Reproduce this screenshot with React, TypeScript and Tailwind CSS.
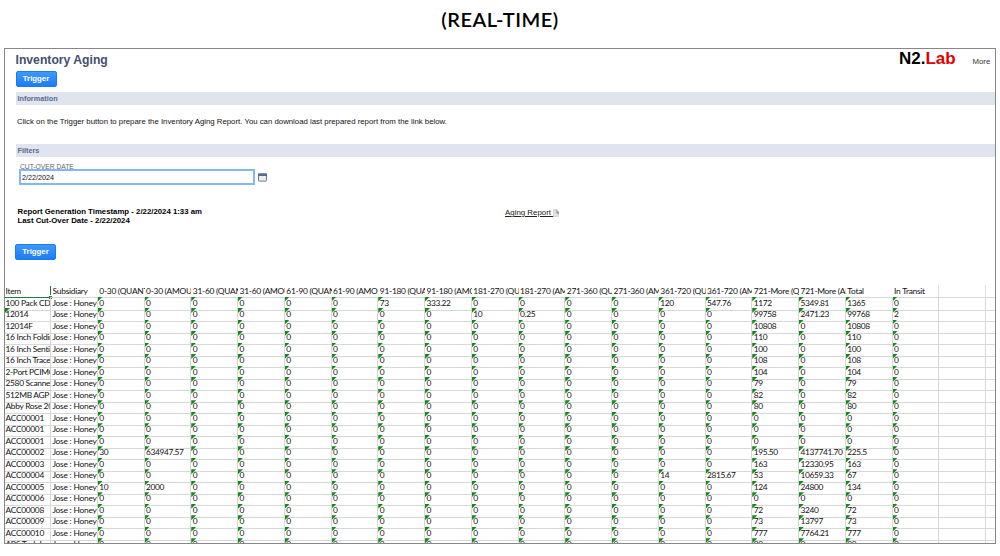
import React from "react";

const headers = [
  "Item", "Subsidiary", "0-30 (QUANTITY)", "0-30 (AMOUNT)", "31-60 (QUANTITY)", "31-60 (AMOUNT)",
  "61-90 (QUANTITY)", "61-90 (AMOUNT)", "91-180 (QUANTITY)", "91-180 (AMOUNT)", "181-270 (QUANTITY)",
  "181-270 (AMOUNT)", "271-360 (QUANTITY)", "271-360 (AMOUNT)", "361-720 (QUANTITY)", "361-720 (AMOUNT)",
  "721-More (QUANTITY)", "721-More (AMOUNT)", "Total", "In Transit", "", "",
];

type Row = { item: string; more: string; amount: string; total: string; transit?: string; extra?: Record<number, string> };

const rows: Row[] = [
  { item: "100 Pack CD-R", more: "1172", amount: "5349.81", total: "1365", extra: { 6: "73", 7: "333.22", 12: "120", 13: "547.76" } },
  { item: "12014", more: "99758", amount: "2471.23", total: "99768", transit: "2", extra: { 8: "10", 9: "0.25" } },
  { item: "12014F", more: "10808", amount: "0", total: "10808" },
  { item: "16 Inch Folding", more: "110", amount: "0", total: "110" },
  { item: "16 Inch Sentinel", more: "100", amount: "0", total: "100" },
  { item: "16 Inch Tracer", more: "108", amount: "0", total: "108" },
  { item: "2-Port PCIMCIA", more: "104", amount: "0", total: "104" },
  { item: "2580 Scanner", more: "79", amount: "0", total: "79" },
  { item: "512MB AGP", more: "82", amount: "0", total: "82" },
  { item: "Abby Rose 2000", more: "80", amount: "0", total: "80" },
  { item: "ACC00001", more: "0", amount: "0", total: "0" },
  { item: "ACC00001", more: "0", amount: "0", total: "0" },
  { item: "ACC00001", more: "0", amount: "0", total: "0" },
  { item: "ACC00002", more: "195.50", amount: "4137741.70", total: "225.5", extra: { 0: "30", 1: "634947.57" } },
  { item: "ACC00003", more: "163", amount: "12330.95", total: "163" },
  { item: "ACC00004", more: "53", amount: "10659.33", total: "67", extra: { 12: "14", 13: "2815.67" } },
  { item: "ACC00005", more: "124", amount: "24800", total: "134", extra: { 0: "10", 1: "2000" } },
  { item: "ACC00006", more: "0", amount: "0", total: "0" },
  { item: "ACC00008", more: "72", amount: "3240", total: "72" },
  { item: "ACC00009", more: "73", amount: "13797", total: "73" },
  { item: "ACC00010", more: "777", amount: "7764.21", total: "777" },
  { item: "ABS Tech Inc", more: "90", amount: "0", total: "90" },
];

const gridCols = "grid w-[1028px] grid-cols-[46px_repeat(21,46.76px)]";

function Flag() {
  return <span className="absolute left-0 top-0 h-[5px] w-[5px] bg-[#118a1c] [clip-path:polygon(0_0,100%_0,0_100%)]" />;
}

function SectionBar({ children }: { children: React.ReactNode }) {
  return (
    <div className="ml-[10.5px] h-[13px] bg-[#dfe4ee] pl-[2px] text-[7.3px] font-bold leading-[13px] text-[#586b8f]">
      {children}
    </div>
  );
}

function TriggerButton() {
  return (
    <button className="block h-4 w-[41px] rounded-[2px] border border-[#1c7bea] bg-gradient-to-b from-[#3d98ff] to-[#1d7df3] text-center text-[7.8px] font-bold leading-[14px] text-white">
      Trigger
    </button>
  );
}

function Sheet() {
  return (
    <div className="overflow-hidden font-['Lato','Noto_Sans',sans-serif] text-[8.4px] leading-[13px] tracking-[-0.38px] text-[#111]">
      <div className={`${gridCols} h-[11.5px]`}>
        {headers.map((h, i) => (
          <div
            key={i}
            className={`relative whitespace-nowrap ${i === 0 ? "border-b border-[#1f7a45] pl-[0.5px]" : "border-b border-[#d8d8d8] pl-[1.6px]"} ${i >= 19 ? "border-r border-r-[#dedede]" : ""}`}
          >
            <div className="h-[12px] overflow-hidden tracking-[-0.26px]">{h || "\u00a0"}</div>
            {i === 0 && (
              <>
                <span className="absolute top-px right-0 h-[9px] w-px bg-[#1f7a45]" />
                <span className="absolute -bottom-[2px] -right-[1px] h-[3px] w-[3px] bg-[#1f7a45]" />
              </>
            )}
          </div>
        ))}
      </div>
      {rows.map((r, n) => {
        const cells = Array.from({ length: 14 }, (_, i) => r.extra?.[i] ?? "0").concat([r.more, r.amount, r.total, r.transit ?? "0"]);
        return (
          <div key={n} className={`${gridCols} h-[11.52px]`}>
            <div className="relative overflow-hidden whitespace-nowrap border-b border-r border-[#d8d8d8] pl-[0.5px] tracking-[-0.3px]">
              {r.item === "12014" && <Flag />}
              <span className="relative">{r.item}</span>
            </div>
            <div className="overflow-hidden whitespace-nowrap border-b border-r border-[#d8d8d8] pl-[1.4px] tracking-[-0.22px]">Jose : Honeywell</div>
            {cells.map((c, i) => (
              <div key={i} className="relative whitespace-nowrap border-b border-r border-[#d8d8d8] pl-[1.6px]">
                <Flag />
                <span className="relative">{c}</span>
              </div>
            ))}
            <div className="border-b border-r border-[#d8d8d8]" />
            <div className="border-b border-r border-[#d8d8d8]" />
          </div>
        );
      })}
    </div>
  );
}

export default function App() {
  return (
    <div className="h-[556px] w-[1000px] overflow-hidden bg-white font-['Liberation_Sans',Arial,sans-serif] text-black">
      <h1 className="h-12 pt-[6px] text-center font-['Lato',sans-serif] text-[20px] font-semibold leading-[26px] tracking-[0.5px]">(REAL-TIME)</h1>
      <main className="ml-1 h-[496px] w-[992px] overflow-hidden border border-[#85878b]">
        <div className="flex h-[22px] justify-between">
          <h2 className="pl-[10.5px] pt-[4px] text-[12.2px] font-bold leading-[15px] text-[#43506e]">Inventory Aging</h2>
          <div className="flex">
            <div className="w-[73.5px] text-[17px] font-bold leading-[20px]">
              N2.<span className="text-[#e00000]">Lab</span>
            </div>
            <div className="w-[22.5px] pt-[7px] text-[7.8px] leading-[12px] text-[#333]">More</div>
          </div>
        </div>
        <div className="h-[21px] pl-[10.5px]">
          <TriggerButton />
        </div>
        <SectionBar>Information</SectionBar>
        <p className="h-[39px] pl-3 pt-[11px] text-[7.8px] leading-[12px] text-[#111]">
          Click on the Trigger button to prepare the Inventory Aging Report. You can download last prepared report from the link below.
        </p>
        <SectionBar>Filters</SectionBar>
        <div className="h-[50px] pl-[14px] pt-[6px]">
          <label className="block h-[6px] pl-px text-[6.7px] leading-[8px] text-[#666]">CUT-OVER DATE</label>
          <div className="flex items-center">
            <div className="h-4 w-[236px] border-2 border-[#82b7f0] bg-white pl-[1px] text-[7.2px] leading-[13px] text-[#111]">2/22/2024</div>
            <svg className="ml-[3px] h-[9px] w-[9px]" viewBox="0 0 9 9">
              <rect x="0.5" y="0.9" width="8" height="7.2" rx="0.6" fill="#e9edf3" stroke="#667998" />
              <rect x="0" y="0.5" width="9" height="2.5" fill="#586e91" />
            </svg>
          </div>
        </div>
        <div className="flex h-[37px] pl-[12.5px]">
          <div className="w-[487.5px] text-[7.8px] font-bold leading-[9px]">
            <div>Report Generation Timestamp - 2/22/2024 1:33 am</div>
            <div>Last Cut-Over Date - 2/22/2024</div>
          </div>
          <div className="flex h-3 items-center text-[7.9px] leading-[12px] text-[#222]">
            <span className="whitespace-pre underline">{"Aging Report "}</span>
            <svg className="h-[8px] w-[7px]" viewBox="0 0 7 8">
              <path d="M0.5 0.5h3.5l1.5 1.5v5.5h-5z" fill="#e3e3e3" stroke="#c8c8c8" strokeWidth="0.6" />
              <path d="M3.2 0.8v3.4M4.4 2.2l1.6 1.5-1.6 1.2z" fill="#888" stroke="#888" strokeWidth="0.6" />
            </svg>
          </div>
        </div>
        <div className="h-[41px] pl-[10px]">
          <TriggerButton />
        </div>
        <Sheet />
      </main>
    </div>
  );
}
